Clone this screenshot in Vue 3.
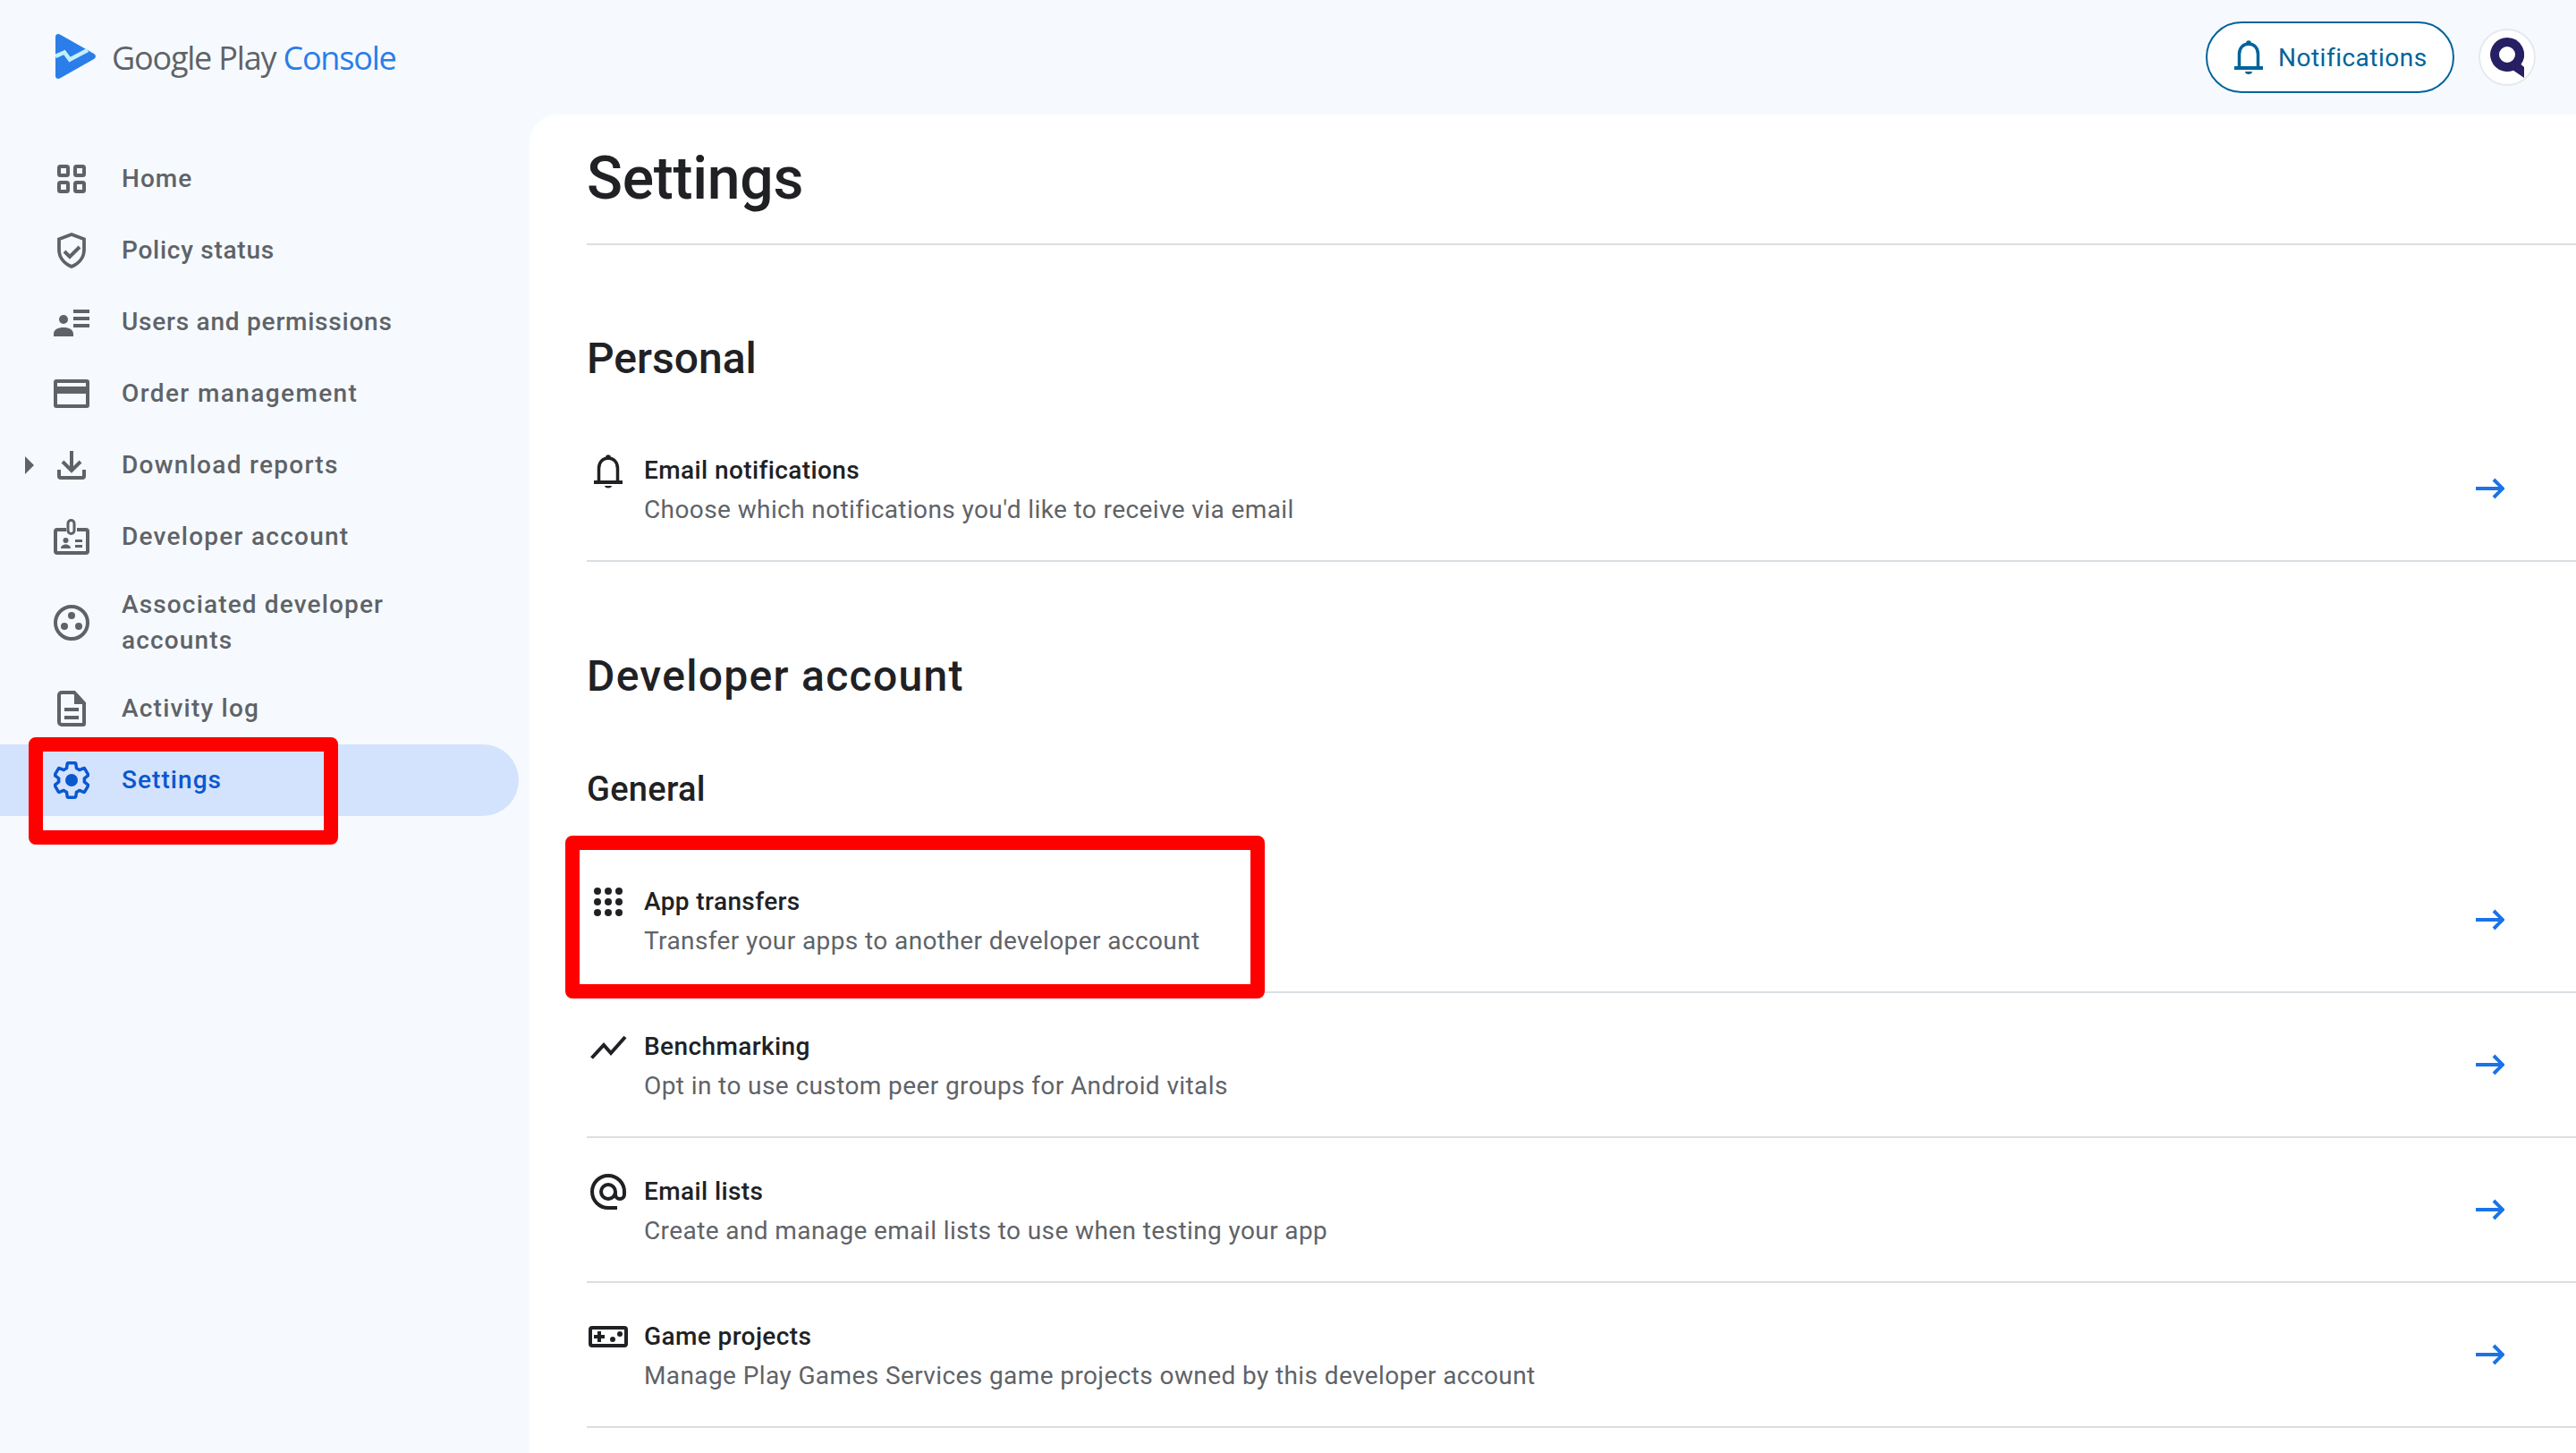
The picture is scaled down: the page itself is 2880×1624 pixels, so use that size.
<script setup>
const nav = [
  { label: 'Home', icon: 'home', ls: 1.06 },
  { label: 'Policy status', icon: 'policy', ls: 0.74 },
  { label: 'Users and permissions', icon: 'users', ls: 0.77 },
  { label: 'Order management', icon: 'card', ls: 1.4 },
  { label: 'Download reports', icon: 'download', caret: true, ls: 1.29 },
  { label: 'Developer account', icon: 'badge', ls: 1.25 },
  { label: 'Associated developer accounts', icon: 'assoc', tall: true, ls: 1.15 },
  { label: 'Activity log', icon: 'doc', ls: 1.21 },
  { label: 'Settings', icon: 'gear', active: true, ls: 1.06 },
]
const general = [
  { title: 'App transfers', sub: 'Transfer your apps to another developer account', icon: 'apps' },
  { title: 'Benchmarking', sub: 'Opt in to use custom peer groups for Android vitals', icon: 'trend' },
  { title: 'Email lists', sub: 'Create and manage email lists to use when testing your app', icon: 'at' },
  { title: 'Game projects', sub: 'Manage Play Games Services game projects owned by this developer account', icon: 'game' },
]
const dots = [[10, 8], [22, 8], [34, 8], [10, 20], [22, 20], [34, 20], [10, 32], [22, 32], [34, 32]]
</script>

<template>
  <div class="page">
    <header class="top">
      <div class="brand">
        <svg class="logo" viewBox="0 0 45 50" width="45" height="50">
          <path d="M0 3C0 .5 2.500-.8 5 .5L43 22c2.500 1.500 2.500 4.500 0 6L5 49.500C2.500 50.800 0 49.500 0 47Z" fill="#2b7de9"/>
          <path d="M0 25l10-4.500 6 8L36 18" fill="none" stroke="#c2f0fb" stroke-width="4.500"/>
        </svg>
        <span class="brand-text">Google Play <span class="brand-blue">Console</span></span>
      </div>
      <div class="top-right">
        <button class="notif">
          <svg viewBox="0 0 32 38" width="32" height="38" fill="#00639b">
            <circle cx="16" cy="3" r="2.800"/>
            <path d="M5.500 30V15.500C5.500 8.500 10 4 16 4s10.500 4.500 10.500 11.500V30" fill="none" stroke="#00639b" stroke-width="3.500"/>
            <path d="M0 29h32v4H0ZM12 35h8c0 1.800-1.800 3-4 3s-4-1.200-4-3Z"/>
          </svg>
          <span>Notifications</span>
        </button>
        <div class="avatar">
          <svg viewBox="0 0 38 45" width="38" height="45"><path d="M19 0a19 19 0 0 1 15.500 30L38 33v12L26 36.700A19 19 0 1 1 19 0Zm0 10a9 9 0 1 0 0 18 9 9 0 0 0 0-18Z" fill="#271f63"/></svg>
        </div>
      </div>
    </header>
    <div class="body">
      <nav class="side">
        <div v-for="n in nav" :key="n.label" class="nav-item" :class="{ tall: n.tall, active: n.active }">
          <span v-if="n.caret" class="caret"></span>
          <svg class="nav-icon" viewBox="0 0 40 48" width="40" height="48" fill="currentColor">
            <g v-if="n.icon === 'home'" fill="none" stroke="currentColor" stroke-width="4">
              <rect x="6" y="10" width="10" height="10" rx="1.500"/><rect x="24" y="10" width="10" height="10" rx="1.500"/>
              <rect x="6" y="28" width="10" height="10" rx="1.500"/><rect x="24" y="28" width="10" height="10" rx="1.500"/>
            </g>
            <g v-else-if="n.icon === 'policy'">
              <path d="M20 6 34 11.200V23c0 8.500-5.600 15.500-14 19C11.600 38.500 6 31.500 6 23V11.200Z" fill="none" stroke="currentColor" stroke-width="3.800"/>
              <path d="M12 25l6 6 11-11" fill="none" stroke="currentColor" stroke-width="4"/>
            </g>
            <g v-else-if="n.icon === 'users'">
              <circle cx="11" cy="21" r="5"/>
              <path d="M0 40v-3c0-4.500 5-7 11-7s11 2.500 11 7v3ZM22 10h18v4H22ZM22 18h18v4H22ZM22 26h18v4H22Z"/>
            </g>
            <g v-else-if="n.icon === 'card'">
              <path fill-rule="evenodd" d="M3 8h34a3 3 0 0 1 3 3v26a3 3 0 0 1-3 3H3a3 3 0 0 1-3-3V11a3 3 0 0 1 3-3Zm1 4v4h32v-4ZM4 24v12h32V24Z"/>
            </g>
            <g v-else-if="n.icon === 'download'">
              <path d="M20 8v21M10 20l10 10 10-10" fill="none" stroke="currentColor" stroke-width="4"/>
              <path d="M6 29v7a2 2 0 0 0 2 2h24a2 2 0 0 0 2-2v-7" fill="none" stroke="currentColor" stroke-width="4"/>
            </g>
            <g v-else-if="n.icon === 'badge'">
              <path d="M14 16H4a2 2 0 0 0-2 2v22a2 2 0 0 0 2 2h32a2 2 0 0 0 2-2V18a2 2 0 0 0-2-2H26" fill="none" stroke="currentColor" stroke-width="4"/>
              <rect x="16" y="5.500" width="7" height="15" rx="3.500" fill="none" stroke="currentColor" stroke-width="3"/>
              <circle cx="13.500" cy="28" r="3"/>
              <path d="M8 37c0-3 2.500-4.500 5.500-4.500S19 34 19 37ZM24 27h8v3h-8ZM24 33h8v3h-8Z"/>
            </g>
            <g v-else-if="n.icon === 'assoc'">
              <circle cx="20" cy="24" r="18" fill="none" stroke="currentColor" stroke-width="4"/>
              <circle cx="20" cy="16" r="4"/><circle cx="12" cy="28" r="4"/><circle cx="28" cy="28" r="4"/>
            </g>
            <g v-else-if="n.icon === 'doc'">
              <path d="M9 6h14l11 12v23a1 1 0 0 1-1 1H9a3 3 0 0 1-3-3V9a3 3 0 0 1 3-3Z" fill="none" stroke="currentColor" stroke-width="4"/>
              <path d="M23 5h1l12 13v1H23ZM12 23h16v4H12ZM12 32h16v4H12Z"/>
            </g>
            <g v-else>
              <path transform="translate(-4 0) scale(2)" fill="none" stroke="currentColor" stroke-width="1.750" stroke-linejoin="round" d="M19.140 12.940c.04-.3.06-.61.06-.94 0-.32-.02-.64-.07-.94l2.030-1.580c.18-.14.23-.41.12-.61l-1.920-3.320c-.12-.22-.37-.29-.59-.22l-2.390.96c-.5-.38-1.030-.7-1.620-.94l-.36-2.540c-.04-.24-.24-.41-.48-.41h-3.840c-.24 0-.43.17-.47.41l-.36 2.540c-.59.24-1.130.57-1.620.94l-2.390-.96c-.22-.08-.47 0-.59.22L2.740 8.870c-.12.21-.08.47.12.61l2.030 1.580c-.05.3-.09.63-.09.94s.02.64.07.94l-2.030 1.580c-.18.14-.23.41-.12.61l1.920 3.320c.12.22.37.29.59.22l2.390-.96c.5.38 1.030.7 1.620.94l.36 2.540c.05.24.24.41.48.41h3.840c.24 0 .44-.17.47-.41l.36-2.540c.59-.24 1.130-.56 1.620-.94l2.390.96c.22.08.47 0 .59-.22l1.920-3.320c.12-.22.07-.47-.12-.61l-2.010-1.580z"/>
              <circle cx="20" cy="24" r="7"/>
            </g>
          </svg>
          <span class="nav-label" :style="{ letterSpacing: n.ls + 'px' }">{{ n.label }}</span>
        </div>
        <span class="mark mark-nav"></span>
      </nav>
      <main class="main">
        <h1 class="title">Settings</h1>
        <h2 class="h-personal">Personal</h2>
        <div class="row row-first">
          <svg class="row-icon" viewBox="0 0 44 48" width="44" height="48" fill="#202124">
            <circle cx="22" cy="5" r="2.800"/>
            <path d="M11.500 32V17.500C11.500 10.500 16 6 22 6s10.500 4.500 10.500 11.500V32" fill="none" stroke="#202124" stroke-width="3.500"/>
            <path d="M6 31h32v4H6ZM18 37h8c0 1.500-1.800 2.500-4 2.500s-4-1-4-2.500Z"/>
          </svg>
          <div class="row-text"><div class="row-title">Email notifications</div><div class="row-sub">Choose which notifications you'd like to receive via email</div></div>
          <svg class="arrow" viewBox="0 0 32 24" width="32" height="24"><path d="M0 12h29M20 2l10 10-10 10" fill="none" stroke="#1a73e8" stroke-width="4"/></svg>
        </div>
        <h2 class="h-dev">Developer account</h2>
        <h3 class="h-general">General</h3>
        <div class="rows">
          <div v-for="r in general" :key="r.title" class="row">
            <svg class="row-icon" viewBox="0 0 44 48" width="44" height="48" fill="#202124">
              <g v-if="r.icon === 'apps'">
                <circle v-for="c in dots" :key="c.join()" :cx="c[0]" :cy="c[1]" r="4"/>
              </g>
              <path v-else-if="r.icon === 'trend'" d="M3.500 32.500 17 18l8 9 16-18" fill="none" stroke="#202124" stroke-width="4"/>
              <g v-else-if="r.icon === 'at'" fill="none" stroke="#202124" stroke-width="4">
                <circle cx="22" cy="20" r="8"/>
                <path d="M30 20v3a4.500 4.500 0 0 0 10 0v-3a18 18 0 1 0-18 18h10"/>
              </g>
              <g v-else>
                <rect x="2" y="10" width="40" height="20" rx="2" fill="none" stroke="#202124" stroke-width="4"/>
                <path d="M6 20h12M12 14v12" fill="none" stroke="#202124" stroke-width="4"/>
                <circle cx="27" cy="23" r="3"/><circle cx="35" cy="17" r="3"/>
              </g>
            </svg>
            <div class="row-text"><div class="row-title">{{ r.title }}</div><div class="row-sub">{{ r.sub }}</div></div>
            <svg class="arrow" viewBox="0 0 32 24" width="32" height="24"><path d="M0 12h29M20 2l10 10-10 10" fill="none" stroke="#1a73e8" stroke-width="4"/></svg>
          </div>
        </div>
        <span class="mark mark-row"></span>
      </main>
    </div>
  </div>
</template>

<style>
html, body { margin: 0; background: #f6fafe; }
</style>

<style scoped>
.page { width: 2880px; height: 1624px; overflow: hidden; background: #f6fafe; font-family: Roboto, sans-serif; position: relative; }
.top { height: 128px; display: flex; align-items: center; justify-content: space-between; padding: 0 45px 0 62px; box-sizing: border-box; }
.brand { display: flex; align-items: center; gap: 18px; }
.logo { display: block; margin-top: -2px; }
.brand-text { font-family: "Open Sans", sans-serif; font-size: 36px; color: #5f6368; letter-spacing: -1.200px; }
.brand-blue { color: #2b7de9; }
.top-right { display: flex; align-items: center; gap: 27px; }
.notif { height: 80px; width: 278px; box-sizing: border-box; display: flex; align-items: center; gap: 17px; background: #fff; border: 2px solid #00639b; border-radius: 40px; color: #00639b; font: 400 28px Roboto, sans-serif; letter-spacing: .5px; padding: 0 0 0 30px; }
.avatar { width: 64px; height: 64px; border-radius: 50%; background: #fff; border: 2px solid #e6eaed; box-sizing: border-box; display: flex; align-items: center; justify-content: center; }
.body { display: flex; height: 1496px; }
.side { width: 592px; flex: none; padding-top: 32px; box-sizing: border-box; position: relative; }
.nav-item { height: 80px; width: 580px; box-sizing: border-box; display: flex; align-items: center; padding-left: 60px; position: relative; color: #5f6368; }
.nav-item.tall { height: 112px; }
.nav-item.active { background: #d3e3fd; border-radius: 0 40px 40px 0; color: #0b57d0; }
.nav-icon { flex: none; }
.nav-label { margin-left: 36px; width: 340px; font-size: 28px; font-weight: 500; line-height: 40px; }
.caret { position: absolute; left: 28px; top: 30px; border-left: 10px solid #5f6368; border-top: 10px solid transparent; border-bottom: 10px solid transparent; }
.main { flex: 1; background: #fff; border-radius: 32px 0 0 0; padding-left: 64px; position: relative; color: #202124; }
.title { margin: 0; height: 146px; line-height: 143px; box-sizing: border-box; font-size: 66px; font-weight: 500; letter-spacing: -.25px; border-bottom: 2px solid #dadfe3; }
.h-personal { margin: 0; padding-top: 97px; font-size: 48px; font-weight: 500; line-height: 60px; }
.h-dev { margin: 0; padding-top: 98px; font-size: 48px; font-weight: 500; line-height: 60px; letter-spacing: 1.300px; }
.h-general { margin: 0; padding-top: 72px; font-size: 38px; font-weight: 500; line-height: 48px; letter-spacing: .3px; }
.row { height: 162px; box-sizing: border-box; display: flex; align-items: flex-start; border-bottom: 2px solid #dadfe3; padding: 40px 0 0 2px; position: relative; }
.row-first { margin-top: 35px; }
.rows { margin-top: 42px; }
.row-icon { flex: none; margin-right: 18px; }
.row-title { font-size: 28px; font-weight: 500; line-height: 40px; letter-spacing: .4px; }
.row-sub { font-size: 28px; font-weight: 400; line-height: 40px; color: #5f6368; letter-spacing: .4px; margin-top: 4px; }
.arrow { position: absolute; right: 80px; top: 68px; }
.mark { position: absolute; border: 16px solid #f00; border-radius: 8px; box-sizing: border-box; }
.mark-nav { left: 32px; top: 696px; width: 346px; height: 120px; }
.mark-row { left: 40px; top: 806px; width: 782px; height: 182px; }
</style>
